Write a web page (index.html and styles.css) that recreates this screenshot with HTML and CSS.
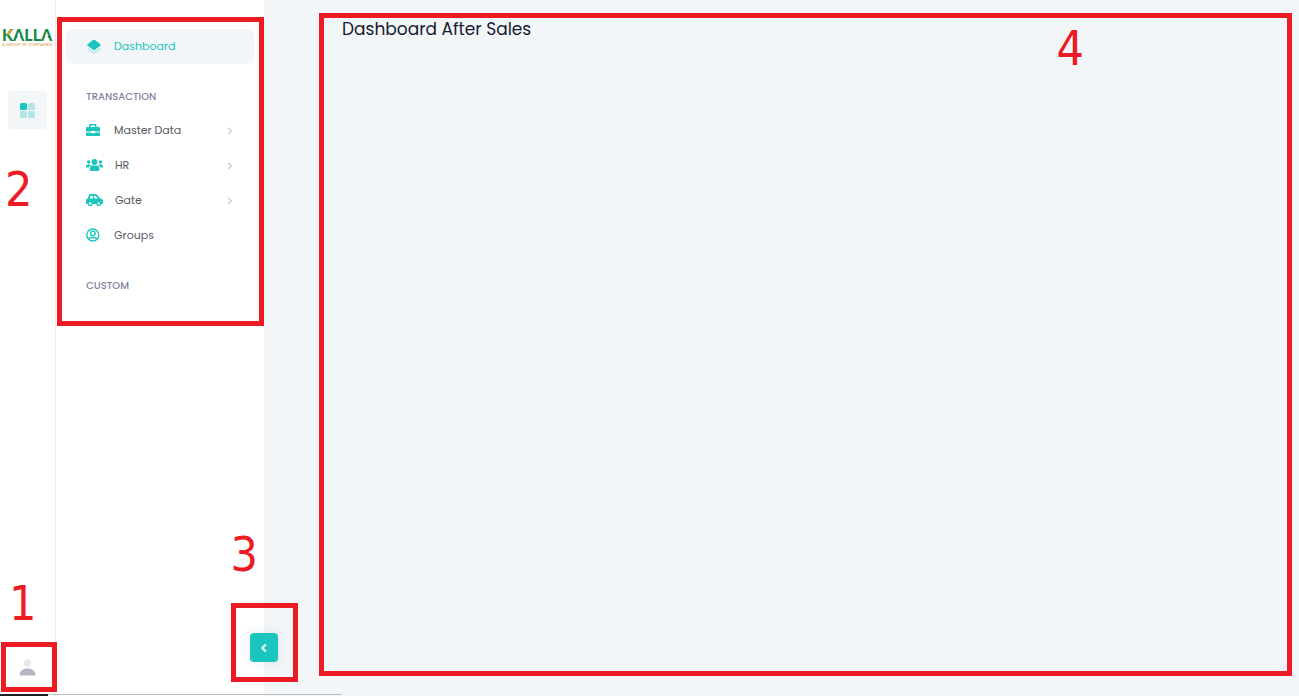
FILE: index.html
```html
<!DOCTYPE html>
<html lang="en">
<head>
<meta charset="utf-8">
<meta name="viewport" content="width=device-width, initial-scale=1">
<title>Dashboard After Sales</title>
<link rel="stylesheet" href="styles.css">
</head>
<body>
<div class="app">
  <aside class="rail">
    <a class="logo" href="#" aria-label="Kalla, a group of companies">
      <svg class="logo-mark" viewBox="0 0 51 18">
        <text class="logo-name" x="0" y="12">KALLA</text>
        <path d="m16.900 4 3 8.500h-6zM44.400 4l3 8.500h-6z" fill="#fff"/>
        <path d="M3.400 7.200C5 6 6.200 3.500 7 .8h3.600C9.500 4 7 6.600 3.400 7.200z" fill="#e3a33c"/>
        <text class="logo-tag" x="0" y="17">A GROUP OF COMPANIES</text>
      </svg>
    </a>
    <button class="rail-button" type="button" aria-label="Apps">
      <svg width="15" height="15" viewBox="0 0 15 15" fill="#1bc5bd">
        <rect x="0" y="0" width="7" height="7" rx="1.500"/>
        <g opacity=".3"><rect x="8" y="0" width="7" height="7" rx="1.500"/><rect x="0" y="8" width="7" height="7" rx="1.500"/><rect x="8" y="8" width="7" height="7" rx="1.500"/></g>
      </svg>
    </button>
    <button class="user-button" type="button" aria-label="Profile">
      <svg width="17" height="17" viewBox="0 0 17 17">
        <circle cx="8.500" cy="4" r="3.700" fill="#e6e6ec"/>
        <path d="M.5 16.500C.5 12 4 9.500 8.500 9.500s8 2.500 8 7z" fill="#b5b5c3"/>
      </svg>
    </button>
    <span class="mark-box mark-box-1"></span>
    <span class="mark-number mark-number-1">1</span>
    <span class="mark-number mark-number-2">2</span>
  </aside>

  <aside class="panel">
    <nav class="menu">
      <a class="item active" href="#">
        <svg class="icon" viewBox="0 0 18 18" fill="#1bc5bd"><path d="M2.400 6.500 8 2.100q1-.8 2 0l5.500 4.400q.7.500 0 1L10 11.800q-1 .8-2 0L2.400 7.500q-.6-.5 0-1z"/><path opacity=".35" d="M2.500 9.700 9 14.500l6.500-4.800v1.600l-5.800 4.200q-.7.500-1.400 0l-5.800-4.200z"/></svg>
        <span>Dashboard</span>
      </a>
      <h2 class="section">TRANSACTION</h2>
      <a class="item" href="#">
        <svg class="icon" viewBox="0 0 18 18" fill="#1bc5bd"><path fill-rule="evenodd" d="M4 5V3.200Q4 2 5.200 2h5.100q1.200 0 1.200 1.200V5h2.200Q15 5 15 6.300v3.200h-5V9H6v.5H1V6.300Q1 5 2.300 5zM5.500 5H10V3.500H5.500zM1 10.500h5v.8h4v-.8h5v2.200q0 1.300-1.300 1.300H2.300Q1 14 1 12.700z"/></svg>
        <span>Master Data</span>
        <svg class="arrow" viewBox="0 0 6 8"><path d="m1 .8 3.500 3.200L1 7.200"/></svg>
      </a>
      <a class="item wide" href="#">
        <svg class="icon" viewBox="0 0 18 18" fill="#1bc5bd"><circle cx="9.500" cy="5" r="2.900"/><circle cx="3.700" cy="5" r="1.700"/><circle cx="15.500" cy="5" r="1.700"/><path d="M4.700 12.500q0-3.900 3-3.900h3.700q3 0 3 3.900 0 1.500-1.500 1.500H6.200q-1.500 0-1.500-1.500zM1 10.500v-1q0-2 2-2h1.600q1 0 1.600.7-2 .7-2.300 2.300zM18 10.500v-1q0-2-2-2h-1.400q-1 0-1.600.7 2 .7 2.300 2.300z"/></svg>
        <span>HR</span>
        <svg class="arrow" viewBox="0 0 6 8"><path d="m1 .8 3.500 3.200L1 7.200"/></svg>
      </a>
      <a class="item wide" href="#">
        <svg class="icon" viewBox="0 1 18 18" fill="#1bc5bd"><path fill-rule="evenodd" d="m2.700 7.500 1.400-3.400Q4.600 3 5.800 3h4.700q1 0 1.700.8l2.900 3.700q2.900.2 2.900 3v1.800q0 .7-.7.7h-1.100a2.500 2.500 0 0 1-4.900 0H7.700a2.500 2.500 0 0 1-4.900 0H1.700Q1 13 1 12.300V9.500q0-1.700 1.700-2zM4.700 7.400h3.100V4.700h-2zM9.200 7.400h3.700l-2.200-2.700H9.200z"/><circle cx="5.200" cy="12.700" r="2.400"/><circle cx="13.700" cy="12.700" r="2.400"/><circle cx="5.200" cy="12.500" r="1.200" fill="#fff"/><circle cx="13.700" cy="12.500" r="1.200" fill="#fff"/></svg>
        <span>Gate</span>
        <svg class="arrow" viewBox="0 0 6 8"><path d="m1 .8 3.500 3.200L1 7.200"/></svg>
      </a>
      <a class="item" href="#">
        <svg class="icon" viewBox="0 1 18 18" fill="none" stroke="#1bc5bd" stroke-width="1.400"><circle cx="7.800" cy="9" r="6"/><circle cx="7.800" cy="7.400" r="2.300"/><path d="M3.800 13q1.200-1.700 2.700-1.400 1.300.4 2.600 0 1.500-.3 2.700 1.400"/></svg>
        <span>Groups</span>
      </a>
      <h2 class="section">CUSTOM</h2>
      <span class="mark-box mark-box-2"></span>
    </nav>
    <button class="toggle" type="button" aria-label="Collapse menu">
      <svg width="8" height="10" viewBox="0 0 8 10"><path d="M5.800 1.500 2.300 5l3.500 3.500" fill="none" stroke="#fff" stroke-width="2"/></svg>
    </button>
    <span class="mark-box mark-box-3"></span>
    <span class="mark-number mark-number-3">3</span>
  </aside>

  <main class="content">
    <h1 class="title">Dashboard After Sales</h1>
    <span class="mark-number mark-number-4">4</span>
  </main>
  <div class="status-edge"></div>
</div>
</body>
</html>
```
FILE: styles.css
```css
* { box-sizing: border-box; }
body {
  margin: 0;
  background: #f2f6f9;
  color: #181c32;
  font-family: Poppins, Inter, sans-serif;
  font-size: 11px;
}
button { border: 0; padding: 0; cursor: pointer; }
a { color: inherit; text-decoration: none; }
.app { position: relative; display: flex; min-height: 100vh; }

.rail {
  position: relative;
  display: flex;
  flex-direction: column;
  align-items: center;
  flex: 0 0 56px;
  padding: 29px 0 20px;
  background: #fff;
  border-right: 1px solid #e9ebef;
}
.logo { display: block; width: 51px; height: 18px; }
.logo-mark { display: block; width: 51px; height: 18px; overflow: visible; }
.logo-name { font: 900 16px Lato, sans-serif; fill: #138a4a; }
.logo-tag { font: 700 4px "Liberation Sans", sans-serif; fill: #e2b878; }
.rail-button {
  display: grid;
  place-items: center;
  width: 39px;
  height: 38px;
  margin-top: 44px;
  border-radius: 4px;
  background: #f2f6f9;
}
.user-button { margin-top: auto; background: none; }
.user-button svg { display: block; }

.panel { position: relative; flex: 0 0 208px; background: #fff; }
.menu { position: relative; padding: 29px 10px 24px; }
.item {
  display: flex;
  align-items: center;
  gap: 11px;
  height: 35px;
  padding: 0 21px 0 19px;
  border-radius: 5px;
  color: #575962;
}
.item.wide { gap: 12px; }
.item span { flex: 1; }
.item.active { background: #f2f6f9; color: #1bc5bd; }
.icon { width: 18px; height: 18px; }
.arrow { width: 6px; height: 8px; fill: none; stroke: #a9a9ba; stroke-width: 1; }
.section {
  margin: 26px 20px 9px;
  color: #8080a0;
  font-size: 10px;
  line-height: 14px;
  font-weight: 500;
}
.toggle {
  position: absolute;
  right: -14px;
  bottom: 34px;
  display: grid;
  place-items: center;
  width: 28px;
  height: 29px;
  border-radius: 4px;
  background: #1bc5bd;
  box-shadow: 0 0 12px rgba(60, 70, 100, .12);
}

.content {
  position: relative;
  flex: 1;
  min-width: 0;
  margin: 13px 7px 20px 55px;
  padding: 0 18px;
  border: 5px solid #ed1c24;
}
.title { margin: 0; font-size: 17px; line-height: 22px; font-weight: 400; }

.mark-box { position: absolute; border: 5px solid #ed1c24; pointer-events: none; }
.mark-box-1 { left: 1px; right: -2px; bottom: 4px; height: 50px; z-index: 1; }
.mark-box-2 { left: 1px; right: 0; top: 17px; bottom: 0; }
.mark-box-3 { right: -34px; bottom: 14px; width: 67px; height: 79px; }
.mark-number {
  position: absolute;
  color: #ed1c24;
  font: 48px/48px "DejaVu Sans Condensed", "DejaVu Sans", sans-serif;
}
.mark-number-1 { left: 9px; bottom: 69px; }
.mark-number-2 { left: 5px; top: 165px; }
.mark-number-3 { right: 6px; bottom: 118px; }
.mark-number-4 { right: 203px; top: 6px; }

.status-edge {
  position: absolute;
  left: 0;
  bottom: 0;
  width: 342px;
  height: 2px;
  border-top: 1px solid #bdbdbd;
}
.status-edge::before {
  content: "";
  position: absolute;
  left: 0;
  top: -1px;
  width: 48px;
  height: 2px;
  background: #202124;
}
```
